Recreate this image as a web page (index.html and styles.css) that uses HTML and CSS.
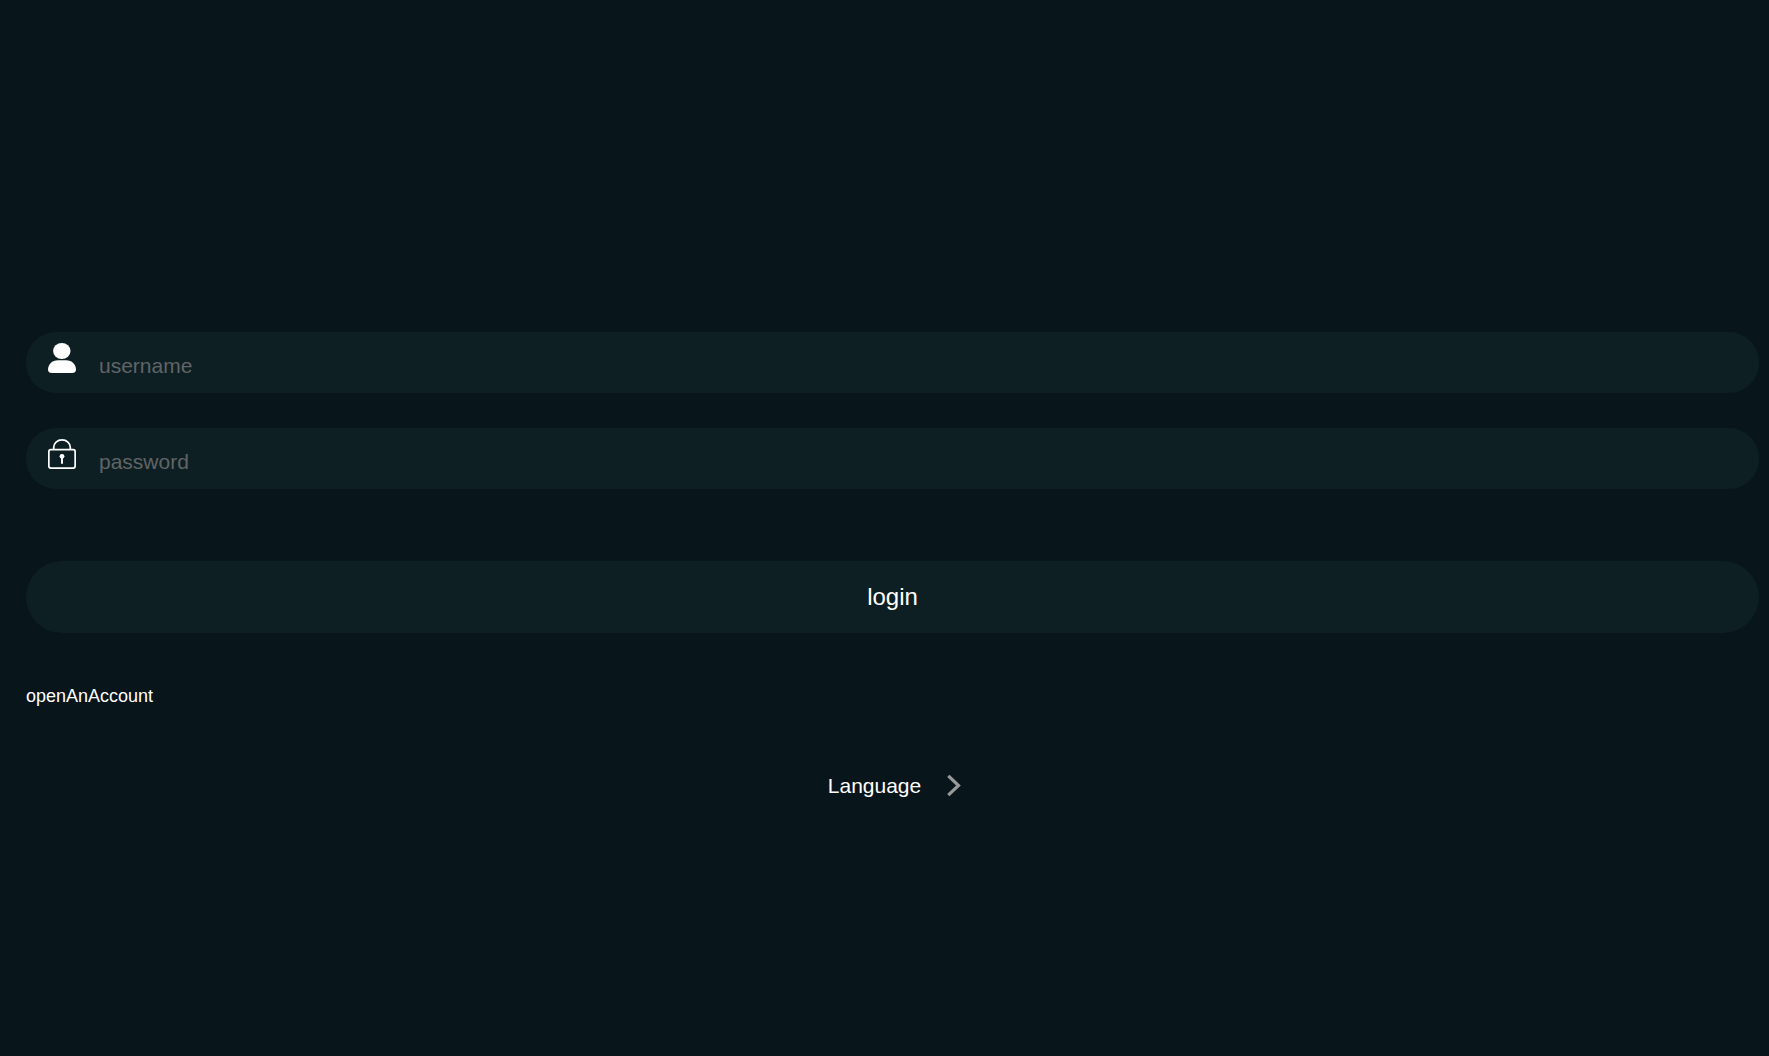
FILE: index.html
```
<!DOCTYPE html>
<html lang="en">
<head>
  <meta charset="UTF-8" />
  <meta name="viewport" content="width=device-width, initial-scale=1.0" />
  <title>login</title>
  <link rel="stylesheet" href="styles.css">
</head>
<body>
  <main class="page">
    <form class="login-form">
      <div class="field">
        <label class="field-icon" for="username" aria-label="username">
          <svg width="28" height="30" viewBox="0 0 28 30" fill="#fff">
            <ellipse cx="13.800" cy="8" rx="8.7" ry="8" />
            <path d="M10 17.2H18C24 17.2 28 21.5 28 26.5C28 29 26.5 30 24 30H4C1.500 30 0 29 0 26.500C0 21.500 4 17.200 10 17.200Z" />
          </svg>
        </label>
        <input type="text" id="username" placeholder="username" />
      </div>
      <div class="field">
        <label class="field-icon" for="password" aria-label="password">
          <svg width="28" height="30" viewBox="0 0 28 30" fill="none" stroke="#fff" stroke-width="1.7">
            <rect x="0.85" y="10.7" width="26.3" height="18.4" rx="2" />
            <path d="M5.700 10.500V8.500C5.700 4 9.300 0.900 14 0.900S22.300 4 22.300 8.500V10.500" />
            <circle cx="14" cy="17.300" r="2.400" fill="#fff" stroke="none" />
            <path d="M14 18V24.800" stroke-width="2" />
          </svg>
        </label>
        <input type="password" id="password" placeholder="password" />
      </div>
      <button type="button" class="login-btn">login</button>
    </form>

    <a class="open-account" href="#">openAnAccount</a>

    <button type="button" class="language">
      <span>Language</span>
      <svg width="14" height="22" viewBox="0 0 14 22" fill="none" stroke="#999" stroke-width="3.2">
        <path d="M1.300 0.800L11.500 10.500L1.300 20.200" />
      </svg>
    </button>
  </main>
</body>
</html>
```

FILE: styles.css
```
body {
  margin: 0;
  font-family: Arial, "Liberation Sans", sans-serif;
  background: #08151a;
  color: #fff;
}

.page {
  display: flex;
  flex-direction: column;
  padding: 332px 10px 40px 26px;
}

.login-form {
  display: flex;
  flex-direction: column;
  gap: 35px;
}

.field {
  display: flex;
  align-items: flex-start;
  gap: 23px;
  box-sizing: border-box;
  height: 61px;
  padding: 11px 22px 0;
  border-radius: 30px;
  background: #0d1f23;
}

.field-icon svg {
  display: block;
}

.field input {
  flex: 1;
  min-width: 0;
  height: 24px;
  margin-top: 11px;
  padding: 0;
  border: none;
  outline: none;
  background: transparent;
  color: #fff;
  font-family: inherit;
  font-size: 21px;
}

.field input::placeholder {
  color: #616466;
}

.login-btn {
  height: 72px;
  margin-top: 37px;
  border: none;
  border-radius: 36px;
  background: #0d1f23;
  color: #fff;
  font-family: inherit;
  font-size: 24px;
  cursor: pointer;
}

.open-account {
  align-self: flex-start;
  margin-top: 53px;
  color: #fff;
  font-size: 18px;
  line-height: 20px;
  text-decoration: none;
}

.language {
  display: flex;
  align-items: center;
  align-self: center;
  gap: 26px;
  margin-top: 68px;
  padding: 0 0 0 4px;
  border: none;
  background: none;
  color: #fff;
  font-family: inherit;
  font-size: 21px;
  line-height: 24px;
  cursor: pointer;
}
```
